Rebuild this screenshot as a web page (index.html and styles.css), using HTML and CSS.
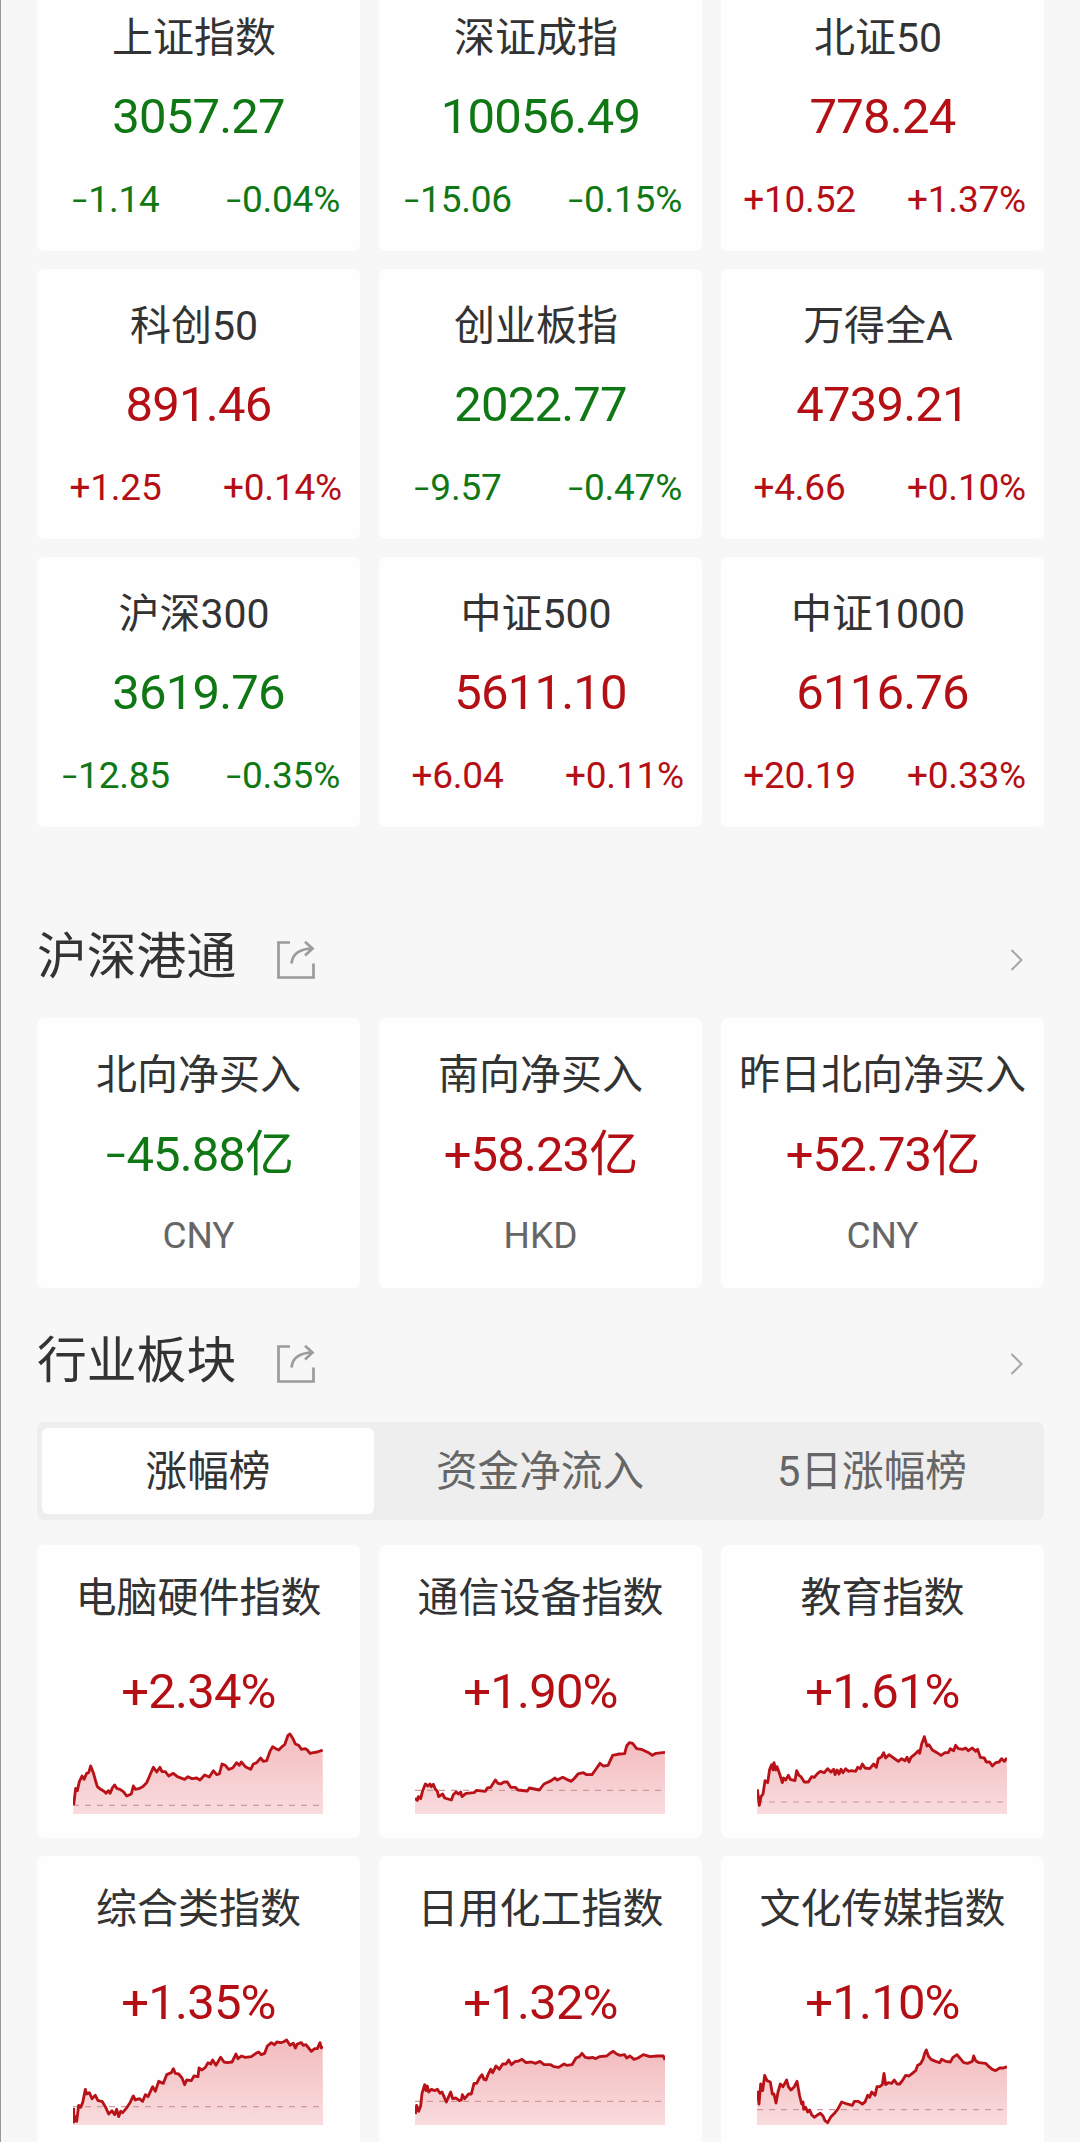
FILE: index.html
```html
<!DOCTYPE html>
<html lang="zh-CN">
<head>
<meta charset="utf-8">
<title>市场行情</title>
<link rel="stylesheet" href="styles.css">
</head>
<body>
<svg class="defs" width="0" height="0">
  <defs>
    <linearGradient id="fade" x1="0" y1="0" x2="0" y2="1">
      <stop offset="0" stop-color="#f3bcbf"/>
      <stop offset="1" stop-color="#f9dcde"/>
    </linearGradient>
    <symbol id="share" viewBox="0 0 38 38">
      <path d="M13 1.5H1.5V36.5H36.5V22.5" fill="none" stroke="#9b9b9b" stroke-width="2.7"/>
      <path d="M14.5 22.5C15.5 13 22 7.8 35.5 7.5M28 .8L35.5 7.5L28 14.5" fill="none" stroke="#9b9b9b" stroke-width="2.7"/>
    </symbol>
    <symbol id="chevron" viewBox="0 0 14 22">
      <path d="M1.5 1L11.5 11L1.5 21" fill="none" stroke="#a6a6a6" stroke-width="2"/>
    </symbol>
  </defs>
</svg>
<main class="page">
  <section class="grid indices">
    <article class="card down"><h3>上证指数</h3><p class="value">3057.27</p><p class="change"><span><i>-</i>1.14</span><span><i>-</i>0.04%</span></p></article>
    <article class="card down"><h3>深证成指</h3><p class="value">10056.49</p><p class="change"><span><i>-</i>15.06</span><span><i>-</i>0.15%</span></p></article>
    <article class="card up"><h3>北证50</h3><p class="value">778.24</p><p class="change"><span>+10.52</span><span>+1.37%</span></p></article>
    <article class="card up"><h3>科创50</h3><p class="value">891.46</p><p class="change"><span>+1.25</span><span>+0.14%</span></p></article>
    <article class="card down"><h3>创业板指</h3><p class="value">2022.77</p><p class="change"><span><i>-</i>9.57</span><span><i>-</i>0.47%</span></p></article>
    <article class="card up"><h3>万得全A</h3><p class="value">4739.21</p><p class="change"><span>+4.66</span><span>+0.10%</span></p></article>
    <article class="card down"><h3>沪深300</h3><p class="value">3619.76</p><p class="change"><span><i>-</i>12.85</span><span><i>-</i>0.35%</span></p></article>
    <article class="card up"><h3>中证500</h3><p class="value">5611.10</p><p class="change"><span>+6.04</span><span>+0.11%</span></p></article>
    <article class="card up"><h3>中证1000</h3><p class="value">6116.76</p><p class="change"><span>+20.19</span><span>+0.33%</span></p></article>
  </section>

  <header class="head first"><h2>沪深港通</h2><svg class="share"><use href="#share"/></svg><svg class="chevron"><use href="#chevron"/></svg></header>
  <section class="grid flows">
    <article class="card down"><h3>北向净买入</h3><p class="value"><i>-</i>45.88亿</p><p class="unit">CNY</p></article>
    <article class="card up"><h3>南向净买入</h3><p class="value">+58.23亿</p><p class="unit">HKD</p></article>
    <article class="card up"><h3>昨日北向净买入</h3><p class="value">+52.73亿</p><p class="unit">CNY</p></article>
  </section>

  <header class="head"><h2>行业板块</h2><svg class="share"><use href="#share"/></svg><svg class="chevron"><use href="#chevron"/></svg></header>
  <nav class="tabs"><span class="tab active">涨幅榜</span><span class="tab">资金净流入</span><span class="tab">5日涨幅榜</span></nav>

  <section class="grid sectors">
    <article class="card up"><h3>电脑硬件指数</h3><p class="value">+2.34%</p>
      <svg class="chart" viewBox="39 0 750 283" data-base="256" data-points="41 255 47 205 52 212 58 185 66 168 72 178 80 160 86 158 92 138 100 158 106 180 112 200 122 208 132 214 138 220 145 212 150 220 158 202 164 195 170 205 180 208 190 215 200 228 214 222 220 198 226 208 236 206 248 200 260 188 270 165 280 142 290 156 300 142 306 155 316 155 326 168 340 160 352 170 374 178 384 170 396 176 410 174 420 180 434 165 448 171 460 152 470 164 478 162 486 132 496 136 506 148 518 144 530 128 538 136 544 126 556 140 572 148 580 132 590 128 602 114 610 124 620 122 630 94 638 80 648 86 656 90 666 80 674 74 684 46 690 42 700 58 706 72 716 76 724 88 736 86 742 90 750 100 760 98 772 96 788 90"></svg></article>
    <article class="card up"><h3>通信设备指数</h3><p class="value">+1.90%</p>
      <svg class="chart" viewBox="45 0 750 283" data-base="211" data-points="45 235 52 241 55 230 62 236 68 212 76 192 84 198 90 192 94 200 100 193 106 208 112 214 116 230 128 222 134 234 154 240 160 224 168 216 176 222 182 216 186 230 198 220 222 218 230 211 256 214 262 204 272 202 286 180 294 190 302 192 312 186 322 186 332 202 346 202 354 210 382 213 388 204 418 210 432 192 454 182 464 174 472 180 488 172 500 178 514 184 524 174 534 162 550 158 560 164 576 164 586 150 600 130 610 138 624 136 638 106 658 102 674 101 680 78 688 68 698 70 710 86 724 88 746 98 757 106 768 100 795 97"></svg></article>
    <article class="card up"><h3>教育指数</h3><p class="value">+1.61%</p>
      <svg class="chart" viewBox="50 0 750 283" data-base="246" data-points="51 208 57 256 62 230 68 222 74 182 82 188 88 148 94 134 98 150 101 128 106 150 110 140 118 162 126 188 130 174 136 180 144 166 150 178 164 182 169 152 176 166 182 170 192 186 204 186 214 170 222 172 232 160 240 154 252 158 262 146 272 156 280 148 284 164 290 150 296 162 302 148 308 158 316 146 324 154 334 152 346 154 352 142 360 146 366 132 374 144 388 146 400 132 408 142 414 116 424 110 430 98 436 114 446 104 460 114 474 124 484 116 494 122 500 112 506 126 512 112 522 104 528 98 534 92 538 100 544 72 552 50 560 78 566 74 576 90 590 98 602 106 614 98 624 98 630 86 640 92 646 76 654 86 668 88 676 84 684 92 696 84 706 94 712 88 720 112 732 114 738 126 748 126 756 138 766 128 776 126 784 116 792 124 800 114"></svg></article>
    <article class="card up"><h3>综合类指数</h3><p class="value">+1.35%</p>
      <svg class="chart" viewBox="39 27 750 283" data-base="254" data-points="41 258 42 300 46 284 50 298 56 250 62 256 68 242 76 202 80 216 88 212 96 230 106 220 114 236 126 238 136 254 146 276 156 266 164 278 170 262 176 284 182 268 188 272 198 260 210 242 220 222 226 234 238 230 248 238 256 218 264 224 278 194 286 208 296 178 310 184 320 158 334 152 340 140 346 154 356 156 366 168 374 188 380 174 394 176 402 162 414 164 417 138 426 144 436 136 444 122 452 126 458 114 468 130 482 106 492 120 502 122 516 120 528 96 534 110 544 102 556 106 574 104 588 94 596 90 604 98 614 94 622 72 634 62 644 68 650 60 662 62 670 60 680 54 690 70 700 64 706 78 712 66 724 62 730 70 738 68 746 78 754 88 764 80 772 80 780 62 784 78 788 72"></svg></article>
    <article class="card up"><h3>日用化工指数</h3><p class="value">+1.32%</p>
      <svg class="chart" viewBox="45 27 750 283" data-base="238" data-points="46 276 50 250 56 268 62 252 66 214 74 188 78 206 82 192 86 210 94 202 104 206 112 202 120 214 126 210 132 224 139 240 146 224 152 210 158 230 168 228 178 236 184 234 187 218 194 230 206 216 214 216 222 184 230 184 238 168 246 158 252 172 258 174 264 158 272 142 278 152 288 132 298 142 308 126 318 126 326 114 334 128 346 118 354 118 366 112 378 122 394 120 406 124 420 118 432 128 442 128 452 128 462 134 476 136 492 126 500 130 516 128 528 108 538 104 546 94 556 106 568 108 578 106 586 110 598 104 620 102 630 94 640 88 650 96 660 100 674 98 680 108 690 102 702 112 714 108 730 98 750 104 772 102 790 102 795 114"></svg></article>
    <article class="card up"><h3>文化传媒指数</h3><p class="value">+1.10%</p>
      <svg class="chart" viewBox="50 27 750 283" data-base="263" data-points="51 206 56 246 61 186 67 206 73 160 80 176 90 180 96 216 101 216 107 243 113 210 120 186 128 194 139 174 144 194 152 204 162 194 170 178 178 222 184 246 188 240 190 262 196 256 202 270 208 264 214 278 222 286 230 280 240 274 248 282 254 296 262 302 272 284 284 272 292 262 304 240 320 246 336 250 342 238 354 238 366 246 374 240 382 220 388 226 394 210 404 220 410 194 418 194 426 188 431 154 436 188 444 182 454 184 462 174 470 186 478 186 486 176 496 160 506 162 516 154 526 146 532 130 540 126 548 112 553 94 558 84 564 102 572 112 586 118 598 122 604 112 616 118 630 120 638 106 650 98 660 110 670 122 682 124 696 118 700 102 706 116 716 122 736 124 746 134 756 142 766 146 778 138 790 138 800 134"></svg></article>
  </section>
</main>
<script src="charts.js"></script>
</body>
</html>
```
FILE: charts.js
```js
// Draws the area, the dashed previous-close line and the price line of each sparkline.
document.querySelectorAll('.chart').forEach(function (svg) {
  var box = svg.getAttribute('viewBox').split(' ').map(Number);
  var left = box[0];
  var right = left + box[2];
  var bottom = box[1] + box[3];
  var points = svg.dataset.points;

  function add(tag, name, attrs) {
    var el = document.createElementNS('http://www.w3.org/2000/svg', tag);
    el.setAttribute('class', name);
    Object.keys(attrs).forEach(function (key) { el.setAttribute(key, attrs[key]); });
    svg.appendChild(el);
  }

  add('polygon', 'area', { points: left + ' ' + bottom + ' ' + points + ' ' + right + ' ' + bottom });
  add('line', 'base', { x1: left, x2: right, y1: svg.dataset.base, y2: svg.dataset.base });
  add('polyline', 'line', { points: points });
});
```
FILE: styles.css
```css
* {
  box-sizing: border-box;
  margin: 0;
  padding: 0;
}

body {
  background: #f7f7f7;
  color: #333;
  font-family: Roboto, "Noto Sans CJK SC", sans-serif;
}

.defs {
  display: block;
}

.page {
  height: 2142px;
  overflow: hidden;
  border-left: 1px solid #999;
  padding: 0 36px;
}

.grid {
  display: grid;
  grid-template-columns: repeat(3, 323px);
  grid-auto-rows: 270px;
  gap: 18px 19px;
}

.indices {
  margin-top: -19.5px;
}

.card {
  background: #fefefe;
  border-radius: 7px;
  padding-top: 27px;
  text-align: center;
  white-space: nowrap;
}

.card h3 {
  height: 60px;
  line-height: 60px;
  font-size: 41px;
  font-weight: 400;
}

.indices h3 {
  padding-right: 9px;
}

.value {
  height: 97px;
  line-height: 97px;
  font-size: 49px;
  letter-spacing: -0.8px;
}

.up .value,
.up .change {
  color: #b40f14;
}

.down .value,
.down .change {
  color: #0f7814;
}

.change {
  display: grid;
  grid-template-columns: 157px 157px;
  gap: 10px;
  height: 70px;
  line-height: 70px;
  font-size: 37px;
  letter-spacing: -0.2px;
}

i {
  display: inline-block;
  font-style: normal;
  width: 0.46em;
  transform: scale(1.45, 0.9);
}

.flows .value {
  height: 100px;
  line-height: 100px;
  letter-spacing: -0.9px;
}

.unit {
  height: 62px;
  line-height: 62px;
  font-size: 37px;
  color: #666;
}

.head {
  display: flex;
  align-items: center;
  height: 134px;
  padding-top: 17px;
}

.head.first {
  margin-top: 57.5px;
}

.head h2 {
  width: 240px;
  padding-bottom: 5px;
  font-size: 49.8px;
  font-weight: 400;
  line-height: 60px;
}

.share {
  width: 38px;
  height: 38px;
}

.chevron {
  width: 14px;
  height: 22px;
  margin-left: auto;
  margin-right: 20px;
}

.tabs {
  display: grid;
  grid-template-columns: repeat(3, 332px);
  width: 1007px;
  height: 98px;
  padding: 6px 5px;
  background: #eee;
  border-radius: 7px;
}

.tab {
  border-radius: 6px;
  text-align: center;
  line-height: 88px;
  height: 86px;
  font-size: 41.6px;
  color: #666;
}

.tab.active {
  background: #fefefe;
  color: #333;
}

.sectors {
  grid-auto-rows: 293px;
  margin-top: 25px;
}

.sectors .card {
  padding-top: 23px;
}

.sectors .value {
  height: 92px;
  padding-top: 15px;
  line-height: 98px;
}

.chart {
  display: block;
  width: 250px;
  height: 94.33px;
  margin: 0 auto;
  position: relative;
  left: -1px;
}

.area {
  fill: url(#fade);
}

.base {
  fill: none;
  stroke: #d0989c;
  stroke-width: 3.4;
  stroke-dasharray: 18 18;
}

.line {
  fill: none;
  stroke: #b81218;
  stroke-width: 8.5;
  stroke-linejoin: round;
}
```
